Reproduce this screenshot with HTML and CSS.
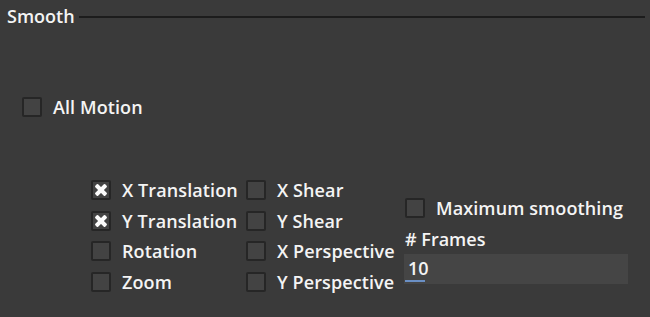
FILE: index.html
```html
<!DOCTYPE HTML><html><head>
  <meta charset="utf-8">
  <title>Smooth</title>
  <meta name="viewport" content="width=device-width, initial-scale=1">
  <link rel="stylesheet" href="styles.css"></head><body>
  <div class="panel">
    <div class="panel-head">
      <span class="panel-title">Smooth</span>
      <span class="panel-rule"></span>
    </div>
    <label class="check all-motion"><span class="box"></span>All Motion</label>
    <div class="options">
      <div class="col col-a">
        <label class="check"><span class="box on"></span>X Translation</label>
        <label class="check"><span class="box on"></span>Y Translation</label>
        <label class="check"><span class="box"></span>Rotation</label>
        <label class="check"><span class="box"></span>Zoom</label>
      </div>
      <div class="col col-b">
        <label class="check"><span class="box"></span>X Shear</label>
        <label class="check"><span class="box"></span>Y Shear</label>
        <label class="check"><span class="box"></span>X Perspective</label>
        <label class="check"><span class="box"></span>Y Perspective</label>
      </div>
      <div class="col col-c">
        <label class="check"><span class="box"></span>Maximum smoothing</label>
        <div class="frames-label"># Frames</div>
        <div class="frames-input"><span class="frames-value">10</span><span class="frames-bar"></span></div>
      </div>
    </div>
  </div>
</body></html>
```

FILE: styles.css
```css
* {font-family: "Open Sans", "Liberation Sans", sans-serif}
html, body
{
  margin: 0;
  background-color: #3a3a3a;
  color: #f4f4f4;
}
.panel
{
  width: 650px;
  height: 317px;
  overflow: hidden;
}
.panel-head {
  display: flex;
  align-items: center;
  height: 34px;
  padding: 0 5px 0 7px;
  gap: 4px;
}
.panel-title {
  font-size: 18px;
  font-weight: 600;
  line-height: 1;
  margin-top: -3px;
}
.panel-rule {
  flex: 1;
  height: 2px;
  background-color: #1c1c1c;
  margin-top: -1px;
}
.check {
  display: flex;
  align-items: center;
  gap: 11px;
  font-size: 18px;
  font-weight: 600;
  letter-spacing: 0.1px;
  height: 30.5px;
  white-space: nowrap;
}
.box {
  width: 16px;
  height: 16px;
  border: 2px solid #262626;
  border-radius: 2px;
  background-color: #434343;
  flex: none;
  position: relative;
}
.box.on::before,
.box.on::after {
  content: "";
  position: absolute;
  left: 1px;
  top: 6px;
  width: 14px;
  height: 4px;
  background-color: #fcfcfc;
  border-radius: 1px;
}
.box.on::before {transform: rotate(45deg);}
.box.on::after {transform: rotate(-45deg);}
.all-motion {
  margin: 58px 0 0 22px;
}
.options {
  display: flex;
  margin: 52.5px 0 0 91px;
}
.col-a {width: 155px;}
.col-b {width: 159px;}
.col-c {padding-top: 18px;}
.frames-label {
  font-size: 18px;
  font-weight: 600;
  height: 30px;
  line-height: 30px;
}
.frames-input {
  width: 224px;
  height: 30px;
  background-color: #454545;
  position: relative;
  margin-left: -1px;
}
.frames-value {
  display: block;
  font-size: 18px;
  font-weight: 600;
  padding-left: 4px;
  line-height: 28px;
}
.frames-bar {
  position: absolute;
  left: 1px;
  bottom: 2px;
  width: 20px;
  height: 2px;
  background-color: #6a8fc4;
}
```
